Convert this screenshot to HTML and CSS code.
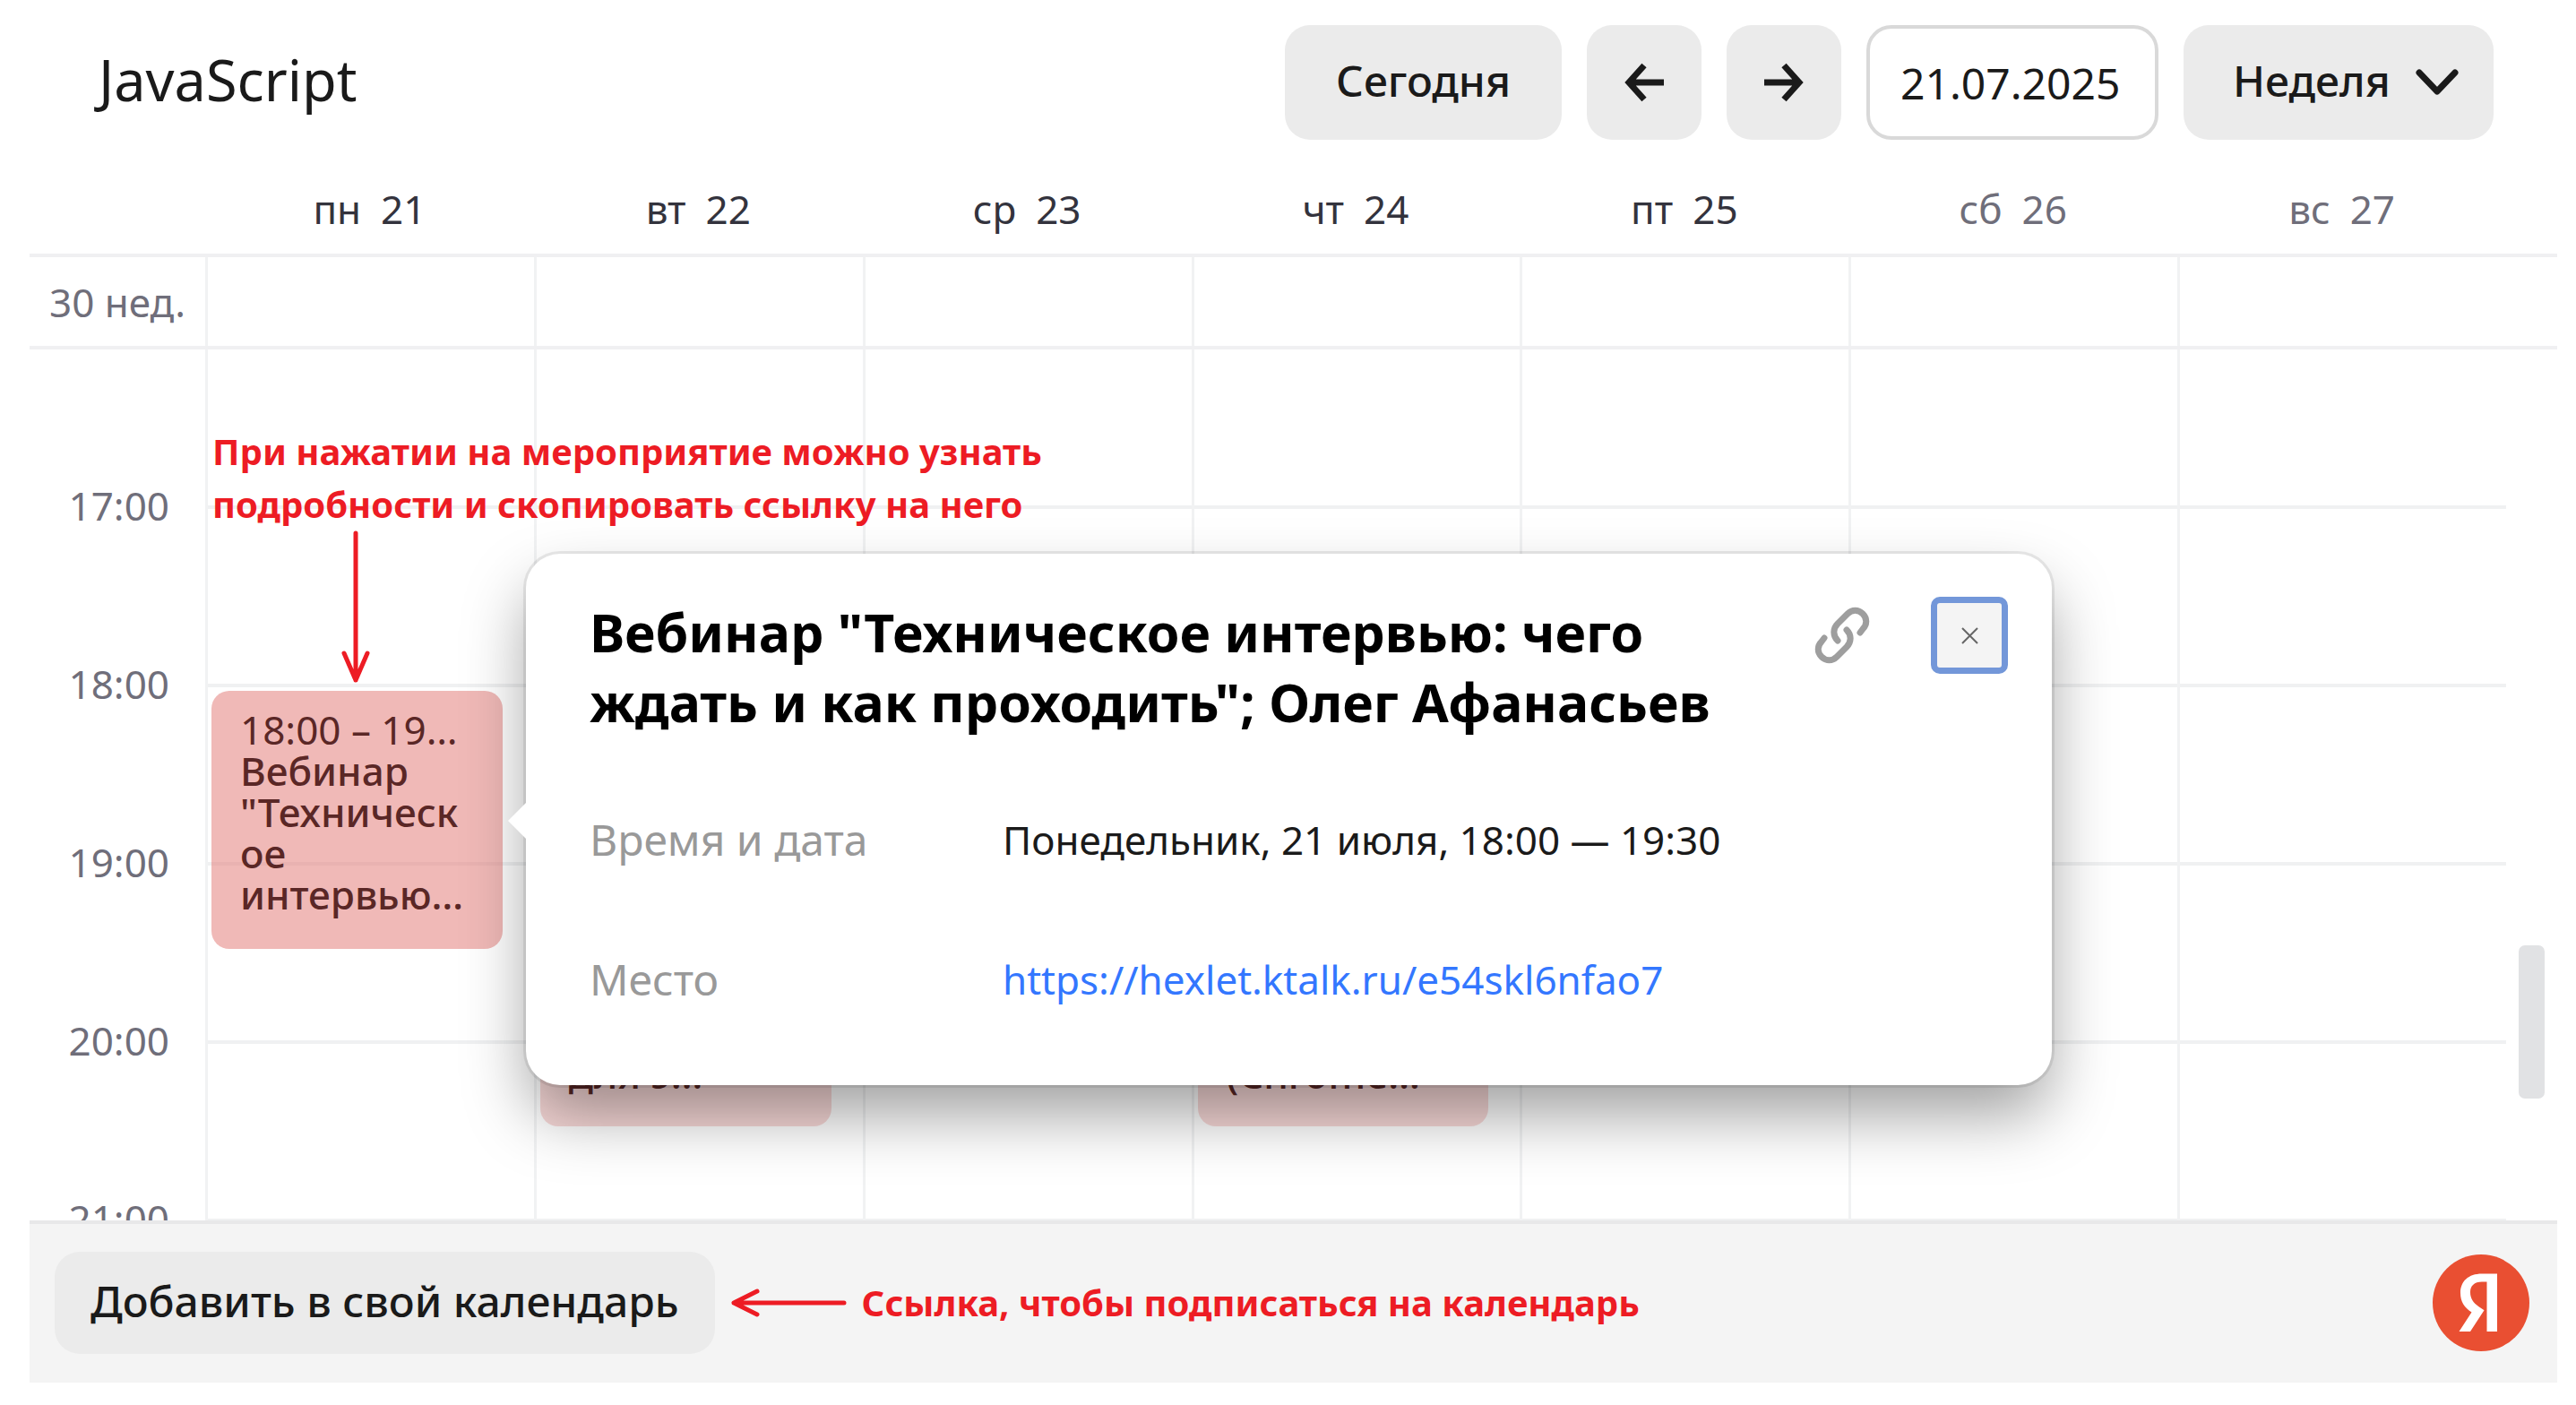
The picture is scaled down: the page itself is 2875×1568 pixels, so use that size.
FILE: index.html
```html
<!DOCTYPE html>
<html lang="ru">
<head>
<meta charset="utf-8">
<meta name="viewport" content="width=device-width, initial-scale=1">
<title>JavaScript</title>
<link rel="stylesheet" href="styles.css">
</head>
<body>
<div class="app">
  <header class="toolbar">
    <h1 class="toolbar-title">JavaScript</h1>
    <div class="toolbar-controls">
      <button class="button" type="button">Сегодня</button>
      <button class="button button-icon" type="button" aria-label="Назад">
        <svg width="48" height="48" viewBox="0 0 48 48" fill="none" stroke="currentColor" stroke-width="7"><path d="M46 24H8M24 5 7 24l17 19"/></svg>
      </button>
      <button class="button button-icon" type="button" aria-label="Вперёд">
        <svg width="48" height="48" viewBox="0 0 48 48" fill="none" stroke="currentColor" stroke-width="7"><path d="M2 24h38M24 5l17 19-17 19"/></svg>
      </button>
      <input class="date-input" type="text" value="21.07.2025" aria-label="Дата">
      <div class="view-picker">
        <select class="view-select" aria-label="Вид">
          <option>Неделя</option>
        </select>
        <svg class="view-chevron" width="48" height="30" viewBox="0 0 48 30" fill="none" stroke="currentColor" stroke-width="7" stroke-linecap="round" stroke-linejoin="round"><path d="M4 4l20 21L44 4"/></svg>
      </div>
    </div>
  </header>

  <div class="week days">
    <div class="day-name"></div>
    <div class="day-name"><span>пн</span><span>21</span></div>
    <div class="day-name"><span>вт</span><span>22</span></div>
    <div class="day-name"><span>ср</span><span>23</span></div>
    <div class="day-name"><span>чт</span><span>24</span></div>
    <div class="day-name"><span>пт</span><span>25</span></div>
    <div class="day-name weekend"><span>сб</span><span>26</span></div>
    <div class="day-name weekend"><span>вс</span><span>27</span></div>
  </div>

  <div class="week all-day">
    <div class="week-number">30 нед.</div>
    <div class="all-day-cell"></div>
    <div class="all-day-cell"></div>
    <div class="all-day-cell"></div>
    <div class="all-day-cell"></div>
    <div class="all-day-cell"></div>
    <div class="all-day-cell"></div>
    <div class="all-day-cell"></div>
  </div>

  <main class="schedule">
    <div class="week timetable">
      <ul class="hours">
        <li>17:00</li>
        <li>18:00</li>
        <li>19:00</li>
        <li>20:00</li>
        <li>21:00</li>
      </ul>
      <div class="day-column">
        <div class="event event-active" style="top: 381px; height: 288px">18:00 – 19…<br><b>Вебинар<br>"Техническ<br>ое<br>интервью…</b></div>
      </div>
      <div class="day-column">
        <div class="event event-short" style="top: 580px; height: 287px"><b>для э…</b></div>
      </div>
      <div class="day-column"></div>
      <div class="day-column">
        <div class="event event-short" style="top: 580px; height: 287px"><b>(Chrome…</b></div>
      </div>
      <div class="day-column"></div>
      <div class="day-column"></div>
      <div class="day-column"></div>
    </div>

    <div class="scroll-thumb"></div>

    <div class="note note-event">
      <p>При нажатии на мероприятие можно узнать<br>подробности и скопировать ссылку на него</p>
      <svg class="note-arrow" width="34" height="172" viewBox="0 0 34 172" fill="none" stroke="currentColor" stroke-width="5" stroke-linecap="round" stroke-linejoin="round"><path d="M17 3v164M4 137l13 30 13-30"/></svg>
    </div>

    <section class="popup">
      <div class="popup-head">
        <h2 class="popup-title">Вебинар "Техническое интервью: чего<br>ждать и как проходить"; Олег Афанасьев</h2>
        <div class="popup-actions">
          <button class="link-button" type="button" aria-label="Скопировать ссылку">
            <svg width="64" height="64" viewBox="0 0 64 64" fill="none" stroke="currentColor" stroke-width="7" stroke-linecap="round" stroke-linejoin="round"><path d="M27 38c-6-6-5-14 0-19l11-11c5-5 12-5 17 0s5 12 0 17l-3 4M37 26c6 6 5 14 0 19L26 56c-5 5-12 5-17 0s-5-12 0-17l3-4"/></svg>
          </button>
          <button class="close-button" type="button" aria-label="Закрыть">
            <svg width="19" height="19" viewBox="0 0 19 19" fill="none" stroke="currentColor" stroke-width="2"><path d="M1 1l17 17M18 1 1 18"/></svg>
          </button>
        </div>
      </div>
      <dl class="popup-details">
        <dt>Время и дата</dt>
        <dd>Понедельник, 21 июля, 18:00 — 19:30</dd>
        <dt>Место</dt>
        <dd><a href="https://hexlet.ktalk.ru/e54skl6nfao7">https://hexlet.ktalk.ru/e54skl6nfao7</a></dd>
      </dl>
    </section>
  </main>

  <footer class="footer">
    <button class="button button-subscribe" type="button">Добавить в свой календарь</button>
    <div class="note note-subscribe">
      <svg width="130" height="34" viewBox="0 0 130 34" fill="none" stroke="currentColor" stroke-width="5" stroke-linecap="round" stroke-linejoin="round"><path d="M127 17H4M30 4 4 17l26 13"/></svg>
      <p>Ссылка, чтобы подписаться на календарь</p>
    </div>
    <a class="logo" href="#" aria-label="Яндекс">
      <svg width="108" height="108" viewBox="0 0 108 108"><circle cx="54" cy="54" r="54" fill="#e94f32"/><path fill="#fff" fill-rule="evenodd" d="M72 21.500V86H60.500V30.500H55C46.500 30.500 42 35 42 42c0 7.500 3.500 12 9.500 16.200l6 4L42 86H29.500l14-21.500C35.500 59 31 53 31 43c0-13 8.800-21.500 24-21.500z"/></svg>
    </a>
  </footer>
</div>
</body>
</html>
```
FILE: styles.css
```css
* {
  box-sizing: border-box;
  margin: 0;
}

body {
  background: #fff;
  color: #1a1a1a;
  font: 44px/60px "Noto Sans", sans-serif;
}

.app {
  display: flex;
  flex-direction: column;
  height: 100vh;
  padding: 0 21px 25px 33px;
}

/* Toolbar */

.toolbar {
  display: flex;
  align-items: center;
  justify-content: space-between;
  padding: 28px 71px 0 77px;
}

.toolbar-title {
  padding-bottom: 6px;
  font-size: 63px;
  font-weight: 400;
  line-height: 88px;
}

.toolbar-controls {
  display: flex;
  gap: 28px;
}

.button {
  height: 128px;
  padding: 0 57px 4px;
  border: 0;
  border-radius: 28px;
  background: #ebebeb;
  color: #1a1a1a;
  font: 500 48px/60px "Noto Sans", sans-serif;
}

.button-icon {
  display: flex;
  align-items: center;
  justify-content: center;
  width: 128px;
  padding: 0;
}

.date-input {
  width: 326px;
  height: 128px;
  padding: 0 34px;
  border: 4px solid #d9d9d9;
  border-radius: 28px;
  background: #fff;
  color: #1a1a1a;
  font: 400 48px/60px "Noto Sans", sans-serif;
}

.view-picker {
  position: relative;
}

.view-select {
  width: 346px;
  height: 128px;
  padding: 0 100px 4px 55px;
  border: 0;
  border-radius: 28px;
  appearance: none;
  background: #ebebeb;
  color: #1a1a1a;
  font: 500 48px/60px "Noto Sans", sans-serif;
}

.view-chevron {
  position: absolute;
  top: 49px;
  right: 39px;
  pointer-events: none;
}

/* Week grid */

.week {
  display: grid;
  grid-template-columns: 196px repeat(7, 1fr);
  padding-right: 57px;
}

.day-name {
  display: flex;
  justify-content: center;
  gap: 22px;
  padding: 47px 0 20px;
  color: #33333d;
}

.weekend {
  color: #6f6e7a;
}

.all-day {
  border-top: 4px solid #f0f0f2;
  border-bottom: 4px solid #f0f0f2;
}

.all-day-cell {
  height: 99px;
  border-left: 3px solid #f1f2f3;
}

.week-number {
  align-self: center;
  padding-right: 22px;
  color: #6f6e7a;
  text-align: right;
}

.schedule {
  position: relative;
  flex: 1;
  min-height: 0;
  overflow: hidden;
}

.hours {
  padding: 144px 40px 0 0;
  color: #6f6e7a;
  list-style: none;
  text-align: right;
}

.hours li {
  height: 199px;
}

.day-column {
  position: relative;
  border-left: 3px solid #f1f2f3;
  background: linear-gradient(#f0f1f2 4px, transparent 4px) 0 174px / 100% 199px;
}

.day-column::before {
  content: "";
  position: absolute;
  inset: 0 0 auto;
  height: 4px;
  background: #fff;
}

.event {
  position: absolute;
  left: 4px;
  right: 35px;
  padding: 20px 20px 0 32px;
  overflow: hidden;
  border-radius: 20px;
  background: rgba(230, 120, 115, 0.28);
  color: #5a2726;
  line-height: 46px;
  white-space: nowrap;
}

.event-active {
  background: rgba(226, 117, 113, 0.51);
}

.event-short {
  display: flex;
  align-items: flex-end;
  padding-bottom: 36px;
}

.event b {
  font-weight: 500;
}

.scroll-thumb {
  position: absolute;
  top: 665px;
  right: 14px;
  width: 29px;
  height: 171px;
  border-radius: 7px;
  background: #e1e2e4;
}

/* Red notes */

.note {
  color: #ed1c24;
  font-size: 40px;
  font-weight: 700;
  line-height: 59px;
  white-space: nowrap;
}

.note-event {
  position: absolute;
  top: 84px;
  left: 204px;
}

.note-arrow {
  display: block;
  margin-left: 143px;
}

.note-subscribe {
  display: flex;
  align-items: center;
  gap: 17px;
}

/* Event popup */

.popup {
  position: absolute;
  top: 228px;
  left: 554px;
  width: 1703px;
  padding: 48px 49px 88px 71px;
  border-radius: 38px;
  background: #fff;
  box-shadow: 0 0 0 3px rgba(0, 0, 0, 0.08), 0 36px 72px -4px rgba(0, 0, 0, 0.38);
}

.popup::before {
  content: "";
  position: absolute;
  top: 278px;
  left: -20px;
  border: 20px solid transparent;
  border-left: 0;
  border-right-color: #fff;
}

.popup-head {
  display: flex;
  justify-content: space-between;
}

.popup-title {
  color: #000;
  font-size: 59px;
  font-weight: 700;
  line-height: 78px;
  white-space: nowrap;
}

.popup-actions {
  display: flex;
  gap: 67px;
  height: 86px;
}

.link-button,
.close-button {
  display: flex;
  align-items: center;
  justify-content: center;
  padding: 0;
  border: 0;
  background: none;
  color: #9e9e9e;
}

.close-button {
  width: 86px;
  border: 7px solid #7397d9;
  border-radius: 10px;
  background: #f4f4f4;
  color: #666;
}

.popup-details {
  display: grid;
  grid-template-columns: 461px 1fr;
  row-gap: 96px;
  margin-top: 85px;
}

.popup-details dt {
  color: #999;
  font-size: 48px;
}

.popup-details dd {
  white-space: nowrap;
}

.popup-details a {
  color: #37f;
  text-decoration: none;
}

/* Footer */

.footer {
  display: flex;
  align-items: center;
  gap: 17px;
  height: 181px;
  padding: 0 31px 2px 28px;
  border-top: 4px solid #e8e8e9;
  background: #f4f4f4;
}

.button-subscribe {
  height: 114px;
  padding: 0 40px 4px;
}

.logo {
  display: flex;
  margin-left: auto;
}
```
